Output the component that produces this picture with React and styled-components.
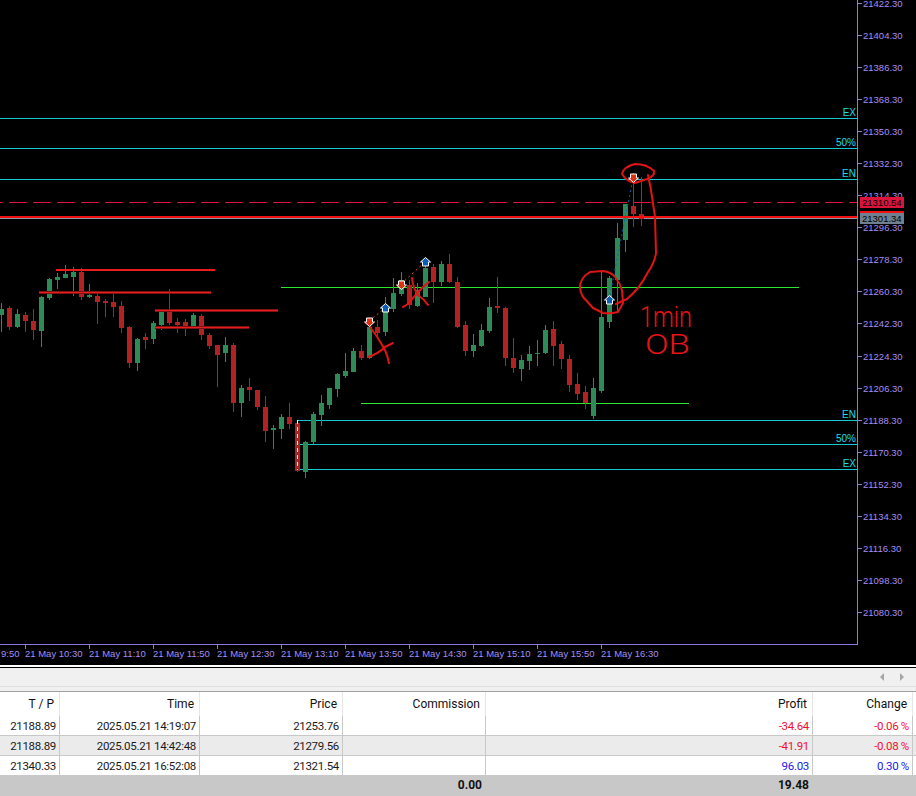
import React from 'react';
import styled, { createGlobalStyle } from 'styled-components';

const GlobalStyle = createGlobalStyle`
  html, body { margin: 0; padding: 0; background: #fff; overflow: hidden; }
`;

const Page = styled.div`
  width: 916px;
  height: 796px;
  display: flex;
  flex-direction: column;
  font-family: Roboto, "Liberation Sans", sans-serif;
`;

const ChartBox = styled.div`
  height: 665px;
  background: #000;
  flex-shrink: 0;
  border-bottom: 2px solid #fff;
  box-shadow: 0 1px 0 #000;
  svg { display: block; }
`;

const Toolbar = styled.div`
  height: 18px;
  margin-top: 1px;
  background: #f0f0f0;
  border-bottom: 1px solid #e0e0e0;
  display: flex;
  align-items: center;
  justify-content: flex-end;
  gap: 16px;
  padding-right: 12px;
`;

const ScrollArrow = styled.span`
  width: 0;
  height: 0;
  border-top: 4px solid transparent;
  border-bottom: 4px solid transparent;
  border-left: ${p => (p.$right ? '4px solid #a6a6a6' : '0')};
  border-right: ${p => (p.$right ? '0' : '4px solid #a6a6a6')};
`;

const Gap = styled.div`
  height: 4px;
  background: #f0f0f0;
`;

const Table = styled.div`
  border-top: 1px solid #a0a0a0;
  flex: 1;
  display: flex;
  flex-direction: column;
`;

const columns = '60px 140px 143px 143px 327px 100px 3px';

const HeaderRow = styled.div`
  display: grid;
  grid-template-columns: ${columns};
  height: 24px;
  background: #fff;
`;

const HeaderCell = styled.div`
  font-size: 12px;
  line-height: 24px;
  color: #111;
  text-align: right;
  padding-right: 5px;
  border-right: 1px solid #e6e6e6;
`;

const Row = styled.div`
  display: grid;
  grid-template-columns: ${columns};
  height: 19px;
  background: ${p => (p.$alt ? '#ebebeb' : '#fff')};
  border-bottom: ${p => (p.$last ? '0' : '1px solid #c8c8c8')};
`;

const Cell = styled.div`
  font-size: 11.5px;
  letter-spacing: -0.3px;
  line-height: 20px;
  color: ${p => p.$color || '#1a1a1a'};
  text-align: right;
  padding-right: 3px;
  border-right: 1px solid #c8c8c8;
`;

const Footer = styled.div`
  display: grid;
  grid-template-columns: ${columns};
  height: 21px;
  background: #c8c8c8;
`;

const FootCell = styled.div`
  font-size: 12px;
  font-weight: 700;
  line-height: 21px;
  color: #111;
  text-align: right;
  padding-right: 4px;
`;

// [red?, wick top, body top, body bottom, wick bottom]
// y values are in 3x units counted from y=240, same as I measured them
const candles = [
  [0, 189, 207, 225, 276], [1, 198, 204, 261, 270], [0, 207, 222, 261, 264], [1, 216, 225, 243, 276],
  [1, 207, 243, 270, 300], [0, 168, 171, 273, 321], [0, 114, 117, 174, 180], [0, 99, 111, 120, 147],
  [0, 75, 102, 114, 114], [0, 81, 96, 111, 168], [1, 84, 96, 171, 180], [0, 132, 165, 171, 174],
  [1, 159, 168, 186, 252], [1, 177, 183, 189, 231], [1, 153, 186, 201, 231], [1, 183, 198, 264, 279],
  [1, 258, 261, 369, 384], [0, 294, 297, 369, 393], [1, 279, 291, 300, 327], [0, 243, 249, 297, 312],
  [0, 210, 213, 255, 270], [1, 147, 213, 249, 255], [1, 234, 246, 255, 279], [1, 237, 246, 261, 288],
  [0, 219, 225, 260, 260], [1, 222, 228, 285, 300], [1, 279, 285, 318, 327], [1, 315, 315, 345, 441],
  [0, 291, 315, 339, 366], [1, 309, 315, 489, 516], [0, 435, 444, 489, 531], [1, 414, 441, 450, 483],
  [1, 450, 450, 501, 510], [1, 468, 501, 573, 606], [0, 555, 564, 570, 627], [0, 522, 531, 567, 597],
  [1, 489, 531, 552, 567], [1, 546, 549, 693, 696], [0, 603, 606, 696, 714], [0, 516, 522, 606, 612],
  [0, 465, 489, 525, 558], [0, 444, 444, 495, 507], [0, 400, 402, 447, 471], [0, 339, 393, 408, 414],
  [0, 324, 333, 396, 396], [1, 315, 333, 354, 360], [0, 240, 261, 354, 357], [1, 240, 261, 279, 290],
  [0, 171, 216, 276, 288], [0, 114, 159, 207, 216], [0, 96, 120, 162, 168], [1, 120, 135, 195, 207],
  [0, 130, 150, 198, 200], [0, 60, 84, 171, 172], [1, 72, 81, 126, 189], [0, 63, 72, 126, 138],
  [1, 42, 72, 126, 129], [1, 111, 126, 261, 264], [1, 243, 255, 333, 348], [0, 282, 315, 333, 351],
  [0, 252, 270, 318, 321], [0, 174, 201, 273, 279], [1, 111, 198, 204, 219], [1, 201, 204, 354, 378],
  [1, 294, 354, 384, 399], [0, 345, 360, 387, 423], [0, 318, 342, 363, 390], [0, 300, 339, 342, 378],
  [0, 255, 270, 339, 342], [1, 243, 267, 318, 378], [1, 303, 312, 357, 387], [1, 345, 357, 435, 456],
  [1, 399, 432, 462, 480], [1, 438, 456, 489, 507], [0, 414, 444, 528, 537], [0, 95, 231, 453, 458],
  [0, 108, 114, 246, 264], [0, -50, -6, 120, 220], [0, -108, -108, 0, 36], [1, -200, -102, -78, -39],
  [1, -190, -78, -63, -42],
];

const toY = v => Math.round(240 + v / 3);

const Candle = ({ i, data }) => {
  const [red, wt, bt, bb, wb] = data;
  const x = 1 + i * 8;
  const fill = red ? '#b22222' : '#2e8b57';
  return (
    <g fill={fill}>
      <rect x={x} y={toY(wt)} width="1" height={toY(wb) - toY(wt)} />
      <rect x={x - 2} y={toY(bt)} width="5" height={Math.max(toY(bb) - toY(bt), 1)} />
    </g>
  );
};

const priceLabels = ['21422.30', '21404.30', '21386.30', '21368.30', '21350.30', '21332.30', '21314.30', '21296.30',
  '21278.30', '21260.30', '21242.30', '21224.30', '21206.30', '21188.30', '21170.30', '21152.30', '21134.30',
  '21116.30', '21098.30', '21080.30'];
const priceY = [3, 35, 67, 99, 131, 163, 195, 227, 259, 291, 323, 356, 388, 420, 452, 484, 516, 548, 580, 612];

const timeLabels = [[25, '21 May 10:30'], [89, '21 May 11:10'], [153, '21 May 11:50'], [217, '21 May 12:30'],
  [281, '21 May 13:10'], [345, '21 May 13:50'], [409, '21 May 14:30'], [473, '21 May 15:10'],
  [537, '21 May 15:50'], [601, '21 May 16:30']];

const AXIS = '#8f78e0';
const CYAN = '#16c8d0';

const AxisText = styled.text`
  font-family: "Liberation Sans", sans-serif;
  font-size: 9.5px;
  fill: #a48ef6;
`;

const LevelText = styled.text`
  font-family: "Liberation Sans", sans-serif;
  font-size: 10px;
  fill: #1cdce4;
  text-anchor: end;
`;

const TagText = styled.text`
  font-family: "Liberation Sans", sans-serif;
  font-size: 9.5px;
  fill: #000;
`;

const Scribble = styled.text`
  font-family: Roboto, "Liberation Sans", sans-serif;
  font-weight: 300;
  fill: #e81414;
`;

const Arrow = ({ x, y, down }) => (
  <polygon
    transform={`translate(${x} ${y}) scale(1 ${down ? -1 : 1})`}
    points="0,-5 5,-0.5 3,-0.5 3,3.5 -3,3.5 -3,-0.5 -5,-0.5"
    fill={down ? '#e0300f' : '#0a5fb4'}
    stroke="#fff"
    strokeWidth="1"
  />
);

const ink = [
  'M370 327 Q378 337 385 350 Q388 357 389 363',
  'M368 357 Q378 354 385 347 Q389 345 393 343',
  'M412 278 Q413 288 418 295 Q424 299 428 305',
  'M403 307 Q409 304 413 298 Q418 292 422 288 L429 282',
  'M622 174 Q623 167 635 164 Q647 164 654 171 Q655 176 647 179 L635 183 Q627 182 622 174',
  'M648 175 L651 190 L655 217 L656 253 Q655 262 648 272 Q644 280 638 288 Q632 295 627 299 L616 304',
  'M580 287 Q580 278 590 272 L603 271 Q611 272 615 277 Q620 283 622 290 L623 303 L618 312 Q610 314 603 313 L593 308 L583 297 Q580 292 580 287',
];

const zones = [[56, 215, 269, false], [39, 211, 292, true], [155, 278, 310, true], [155, 249, 327, true]];

const Chart = () => (
  <svg width="916" height="665" viewBox="0 0 916 665">
    {/* trade levels */}
    <g shapeRendering="crispEdges" strokeWidth="1">
      <line x1="0" x2="857" y1="118.5" y2="118.5" stroke={CYAN} />
      <line x1="0" x2="857" y1="148.5" y2="148.5" stroke={CYAN} />
      <line x1="0" x2="857" y1="179.5" y2="179.5" stroke={CYAN} />
      <line x1="281" x2="799" y1="287.5" y2="287.5" stroke="#2ee62e" />
      <line x1="361" x2="689" y1="403.5" y2="403.5" stroke="#2ee62e" />
      <line x1="297" x2="857" y1="420.5" y2="420.5" stroke={CYAN} />
      <line x1="297" x2="857" y1="444.5" y2="444.5" stroke={CYAN} />
      <line x1="297" x2="857" y1="469.5" y2="469.5" stroke={CYAN} />
      <line x1="0" x2="857" y1="202.5" y2="202.5" stroke="#dc143c" strokeDasharray="18 6" strokeDashoffset="15" />
      <line x1="0" x2="857" y1="218.5" y2="218.5" stroke="#8a96a4" />
    </g>

    {candles.map((c, i) => <Candle key={i} i={i} data={c} />)}

    {/* entry candle dashes */}
    <line x1="297.5" x2="297.5" y1="420" y2="470" stroke="#fff" strokeDasharray="4 3" shapeRendering="crispEdges" />

    {/* red zones */}
    <g shapeRendering="crispEdges">
      {zones.map(([a, b, y, halo]) => (
        <g key={y}>
          {halo && <rect x={a} y={y - 1} width={b - a} height="3" fill="#7e1212" />}
          <rect x={a} y={y} width={b - a} height={halo ? 1 : 2} fill="#ea1c1c" />
        </g>
      ))}
      <rect x="0" y="216" width="857" height="2" fill="#f01010" />
    </g>

    {/* deal links */}
    <g strokeWidth="1" strokeDasharray="2 3" fill="none">
      <line x1="369" y1="321" x2="385" y2="308" stroke="#f0401c" />
      <line x1="401" y1="284" x2="425" y2="262" stroke="#f0401c" />
      <line x1="609" y1="300" x2="633" y2="178" stroke="#0a5fb4" />
    </g>

    <g fill="none" stroke="#e01414" strokeWidth="2" strokeLinecap="round" strokeLinejoin="round">
      {ink.map((d, i) => <path key={i} d={d} />)}
    </g>
    <Scribble x="640" y="327" fontSize="30" textLength="52" lengthAdjust="spacingAndGlyphs">1min</Scribble>
    <Scribble x="645" y="354" fontSize="28" textLength="45" lengthAdjust="spacingAndGlyphs">OB</Scribble>

    <Arrow x={369.5} y={321.5} down />
    <Arrow x={385.5} y={308.5} />
    <Arrow x={401.5} y={284.5} down />
    <Arrow x={425.5} y={262.5} />
    <Arrow x={609.5} y={300.5} />
    <Arrow x={633.5} y={177.5} down />

    {/* axes */}
    <g shapeRendering="crispEdges" stroke={AXIS}>
      <line x1="857.5" x2="857.5" y1="0" y2="645" />
      <line x1="0" x2="858" y1="644.5" y2="644.5" />
      {priceY.map(y => <line key={y} x1="858" x2="862" y1={y + 0.5} y2={y + 0.5} />)}
      {timeLabels.map(([x]) => <line key={x} x1={x + 0.5} x2={x + 0.5} y1="645" y2="649" />)}
    </g>
    {priceLabels.map((t, i) => <AxisText key={t} x="863" y={priceY[i] + 4}>{t}</AxisText>)}
    <AxisText x="1" y="657">9:50</AxisText>
    {timeLabels.map(([x, t]) => <AxisText key={x} x={x} y="657">{t}</AxisText>)}

    <LevelText x="856" y="116">EX</LevelText>
    <LevelText x="856" y="146">50%</LevelText>
    <LevelText x="856" y="177">EN</LevelText>
    <LevelText x="856" y="418">EN</LevelText>
    <LevelText x="856" y="442">50%</LevelText>
    <LevelText x="856" y="467">EX</LevelText>

    {/* bid / ask tags */}
    <g shapeRendering="crispEdges">
      <rect x="860" y="197" width="44" height="11" fill="#dc143c" />
      <rect x="860" y="211" width="44" height="2" fill="#f01010" />
      <rect x="860" y="213" width="44" height="11" fill="#708090" />
    </g>
    <TagText x="862" y="206">21310.54</TagText>
    <TagText x="862" y="222">21301.34</TagText>
  </svg>
);

const RED = '#f01030';
const BLUE = '#2020f0';

const rows = [
  ['21188.89', '2025.05.21 14:19:07', '21253.76', '-34.64', '-0.06 %', RED],
  ['21188.89', '2025.05.21 14:42:48', '21279.56', '-41.91', '-0.08 %', RED],
  ['21340.33', '2025.05.21 16:52:08', '21321.54', '96.03', '0.30 %', BLUE],
];

const App = () => (
  <Page>
    <GlobalStyle />
    <ChartBox>
      <Chart />
    </ChartBox>
    <Toolbar>
      <ScrollArrow />
      <ScrollArrow $right />
    </Toolbar>
    <Gap />
    <Table>
      <HeaderRow>
        <HeaderCell>T / P</HeaderCell>
        <HeaderCell>Time</HeaderCell>
        <HeaderCell>Price</HeaderCell>
        <HeaderCell>Commission</HeaderCell>
        <HeaderCell>Profit</HeaderCell>
        <HeaderCell>Change</HeaderCell>
      </HeaderRow>
      {rows.map((r, i) => (
        <Row key={r[1]} $alt={i === 1} $last={i === 2}>
          <Cell>{r[0]}</Cell>
          <Cell>{r[1]}</Cell>
          <Cell>{r[2]}</Cell>
          <Cell />
          <Cell $color={r[5]}>{r[3]}</Cell>
          <Cell $color={r[5]}>{r[4]}</Cell>
        </Row>
      ))}
      <Footer>
        <FootCell />
        <FootCell />
        <FootCell />
        <FootCell>0.00</FootCell>
        <FootCell>19.48</FootCell>
        <FootCell />
      </Footer>
    </Table>
  </Page>
);

export default App;
